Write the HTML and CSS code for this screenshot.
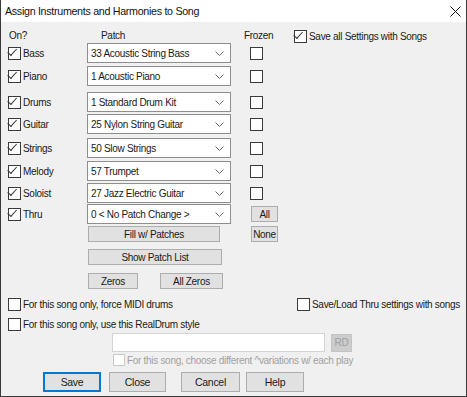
FILE: index.html
```html
<!DOCTYPE html>
<html lang="en">
<head>
    <meta charset="UTF-8">
    <title>Assign Instruments and Harmonies to Song</title>
    <link rel="stylesheet" href="styles.css">
</head>
<body>
    <div class="dialog">
        <div class="titlebar">
            <span class="title">Assign Instruments and Harmonies to Song</span>
            <svg class="close" width="11" height="11" viewBox="0 0 11 11"><path d="M0.5 0.5 L10.5 10.5 M10.5 0.5 L0.5 10.5" stroke="#111" stroke-width="1"/></svg>
        </div>

        <div class="content">
            <div class="tracks">
                <span class="hd hd-on">On?</span>
                <span class="hd hd-patch">Patch</span>
                <span class="hd hd-frozen">Frozen</span>
                <label class="check save-all"><span class="box on"></span>Save all Settings with Songs</label>

                <label class="check cell"><span class="box on"></span>Bass</label>
                <div class="combo cell">33 Acoustic String Bass<svg class="chev" width="9" height="5" viewBox="0 0 9 5"><path d="M0.5 0.5 L4.5 4.5 L8.5 0.5" fill="none" stroke="#6b6b6b"/></svg></div>
                <span class="cell frozen"><span class="box"></span></span>
                <span></span>

                <label class="check cell"><span class="box on"></span>Piano</label>
                <div class="combo cell">1 Acoustic Piano<svg class="chev" width="9" height="5" viewBox="0 0 9 5"><path d="M0.5 0.5 L4.5 4.5 L8.5 0.5" fill="none" stroke="#6b6b6b"/></svg></div>
                <span class="cell frozen"><span class="box"></span></span>
                <span></span>

                <label class="check cell"><span class="box on"></span>Drums</label>
                <div class="combo cell">1 Standard Drum Kit<svg class="chev" width="9" height="5" viewBox="0 0 9 5"><path d="M0.5 0.5 L4.5 4.5 L8.5 0.5" fill="none" stroke="#6b6b6b"/></svg></div>
                <span class="cell frozen"><span class="box"></span></span>
                <span></span>

                <label class="check cell"><span class="box on"></span>Guitar</label>
                <div class="combo cell">25 Nylon String Guitar<svg class="chev" width="9" height="5" viewBox="0 0 9 5"><path d="M0.5 0.5 L4.5 4.5 L8.5 0.5" fill="none" stroke="#6b6b6b"/></svg></div>
                <span class="cell frozen"><span class="box"></span></span>
                <span></span>

                <label class="check cell"><span class="box on"></span>Strings</label>
                <div class="combo cell">50 Slow Strings<svg class="chev" width="9" height="5" viewBox="0 0 9 5"><path d="M0.5 0.5 L4.5 4.5 L8.5 0.5" fill="none" stroke="#6b6b6b"/></svg></div>
                <span class="cell frozen"><span class="box"></span></span>
                <span></span>

                <label class="check cell"><span class="box on"></span>Melody</label>
                <div class="combo cell">57 Trumpet<svg class="chev" width="9" height="5" viewBox="0 0 9 5"><path d="M0.5 0.5 L4.5 4.5 L8.5 0.5" fill="none" stroke="#6b6b6b"/></svg></div>
                <span class="cell frozen"><span class="box"></span></span>
                <span></span>

                <label class="check cell"><span class="box on"></span>Soloist</label>
                <div class="combo cell">27 Jazz Electric Guitar<svg class="chev" width="9" height="5" viewBox="0 0 9 5"><path d="M0.5 0.5 L4.5 4.5 L8.5 0.5" fill="none" stroke="#6b6b6b"/></svg></div>
                <span class="cell frozen"><span class="box"></span></span>
                <span></span>

                <label class="check cell"><span class="box on"></span>Thru</label>
                <div class="combo cell">0 &lt; No Patch Change &gt;<svg class="chev" width="9" height="5" viewBox="0 0 9 5"><path d="M0.5 0.5 L4.5 4.5 L8.5 0.5" fill="none" stroke="#6b6b6b"/></svg></div>
                <span class="cell frozen"><button class="btn small">All</button></span>
                <span></span>

                <span></span>
                <span><button class="btn fill">Fill w/ Patches</button></span>
                <span class="frozen"><button class="btn small">None</button></span>
                <span></span>
            </div>

            <button class="btn show-list">Show Patch List</button>

            <div class="zeros">
                <button class="btn zero">Zeros</button>
                <button class="btn all-zero">All Zeros</button>
            </div>

            <div class="options">
                <label class="check"><span class="box"></span>For this song only, force MIDI drums</label>
                <label class="check"><span class="box"></span>Save/Load Thru settings with songs</label>
            </div>

            <label class="check realdrum"><span class="box"></span>For this song only, use this RealDrum style</label>

            <div class="style-row">
                <div class="style-input"></div>
                <button class="btn rd" disabled>RD</button>
            </div>

            <label class="check disabled variations"><span class="box"></span>For this song, choose different ^variations w/ each play</label>

            <div class="actions">
                <button class="btn action default">Save</button>
                <button class="btn action close-btn">Close</button>
                <button class="btn action cancel">Cancel</button>
                <button class="btn action help">Help</button>
            </div>
        </div>
    </div>
</body>
</html>
```

FILE: styles.css
```css
* {
    margin: 0;
    padding: 0;
    box-sizing: border-box;
}

body {
    font-family: 'Liberation Sans', Arial, sans-serif;
    font-size: 10px;
    letter-spacing: -0.3px;
    color: #1a1a1a;
    background: #f0f0f0;
}

.dialog {
    width: 467px;
    height: 397px;
    background: #f0f0f0;
    border: 1px solid #3a3a3a;
    border-top: none;
    overflow: hidden;
}

.titlebar {
    height: 22px;
    background: #fff;
    display: flex;
    align-items: center;
    justify-content: space-between;
    padding: 0 5px 0 4px;
}

.title {
    font-size: 10.7px;
    color: #111;
}

.close {
    display: block;
}

.content {
    padding: 7px 0 0 7px;
}

/* main grid: checkbox | patch combo | frozen | rest */
.tracks {
    display: grid;
    grid-template-columns: 79px 163px 44px 1fr;
    grid-template-rows: 14px 23px 26px 22px 24px 23px 22px 21px 22px 16px;
    align-items: start;
}

.hd {
    line-height: 14px;
}

.hd-on {
    padding-left: 1px;
}

.hd-patch {
    padding-left: 14px;
}

.hd-frozen {
    margin-left: -6px;
}

.cell {
    height: 20px;
    display: flex;
    align-items: center;
}

.check {
    display: flex;
    align-items: center;
    gap: 2px;
    white-space: nowrap;
}

.save-all {
    height: 14px;
}

.box {
    flex: none;
    width: 13px;
    height: 13px;
    background: #fff;
    border: 1px solid #3b3b3b;
    position: relative;
}

.box.on::after {
    content: "";
    position: absolute;
    left: 2px;
    top: 0;
    width: 8px;
    height: 4px;
    border-left: 1px solid #333;
    border-bottom: 1px solid #333;
    transform: translate(0, 3px) rotate(-48deg);
    transform-origin: left bottom;
}

.combo {
    width: 144px;
    background: #fff;
    border: 1px solid #8e8e8e;
    padding: 0 6px 0 3px;
    justify-content: space-between;
}

.chev {
    display: block;
    flex: none;
}

.btn {
    font-family: inherit;
    font-size: 10px;
    letter-spacing: -0.3px;
    color: #1a1a1a;
    background: #e1e1e1;
    border: 1px solid #adadad;
    height: 16px;
    display: block;
}

.small {
    width: 27px;
    margin-left: 1px;
}

.fill {
    width: 132px;
    margin-left: 1px;
}

.show-list {
    width: 134px;
    margin: 7px 0 0 80px;
}

.zeros {
    display: flex;
    gap: 22px;
    margin: 8px 0 0 80px;
}

.zero {
    width: 50px;
}

.all-zero {
    width: 63px;
}

.options {
    display: grid;
    grid-template-columns: 289px 1fr;
    margin-top: 9px;
    height: 13px;
}

.realdrum {
    margin-top: 7px;
}

.style-row {
    display: flex;
    align-items: center;
    gap: 6px;
    margin: 2px 0 0 104px;
}

.style-input {
    width: 213px;
    height: 19px;
    background: #fff;
    border: 1px solid #d4d4d4;
}

.rd {
    width: 21px;
    height: 18px;
    background: #cccccc;
    border-color: #c4c4c4;
    color: #a0a0a0;
}

.variations {
    margin: 2px 0 0 105px;
    color: #a0a0a0;
}

.variations .box {
    width: 12px;
    height: 12px;
    border-color: #c8c8c8;
}

.actions {
    display: flex;
    margin: 6px 0 0 35px;
}

.action {
    height: 20px;
    font-size: 10.5px;
}

.default {
    width: 58px;
    border: 2px solid #0078d7;
}

.close-btn {
    width: 57px;
    margin-left: 8px;
}

.cancel {
    width: 59px;
    margin-left: 15px;
}

.help {
    width: 58px;
    margin-left: 6px;
}
```
